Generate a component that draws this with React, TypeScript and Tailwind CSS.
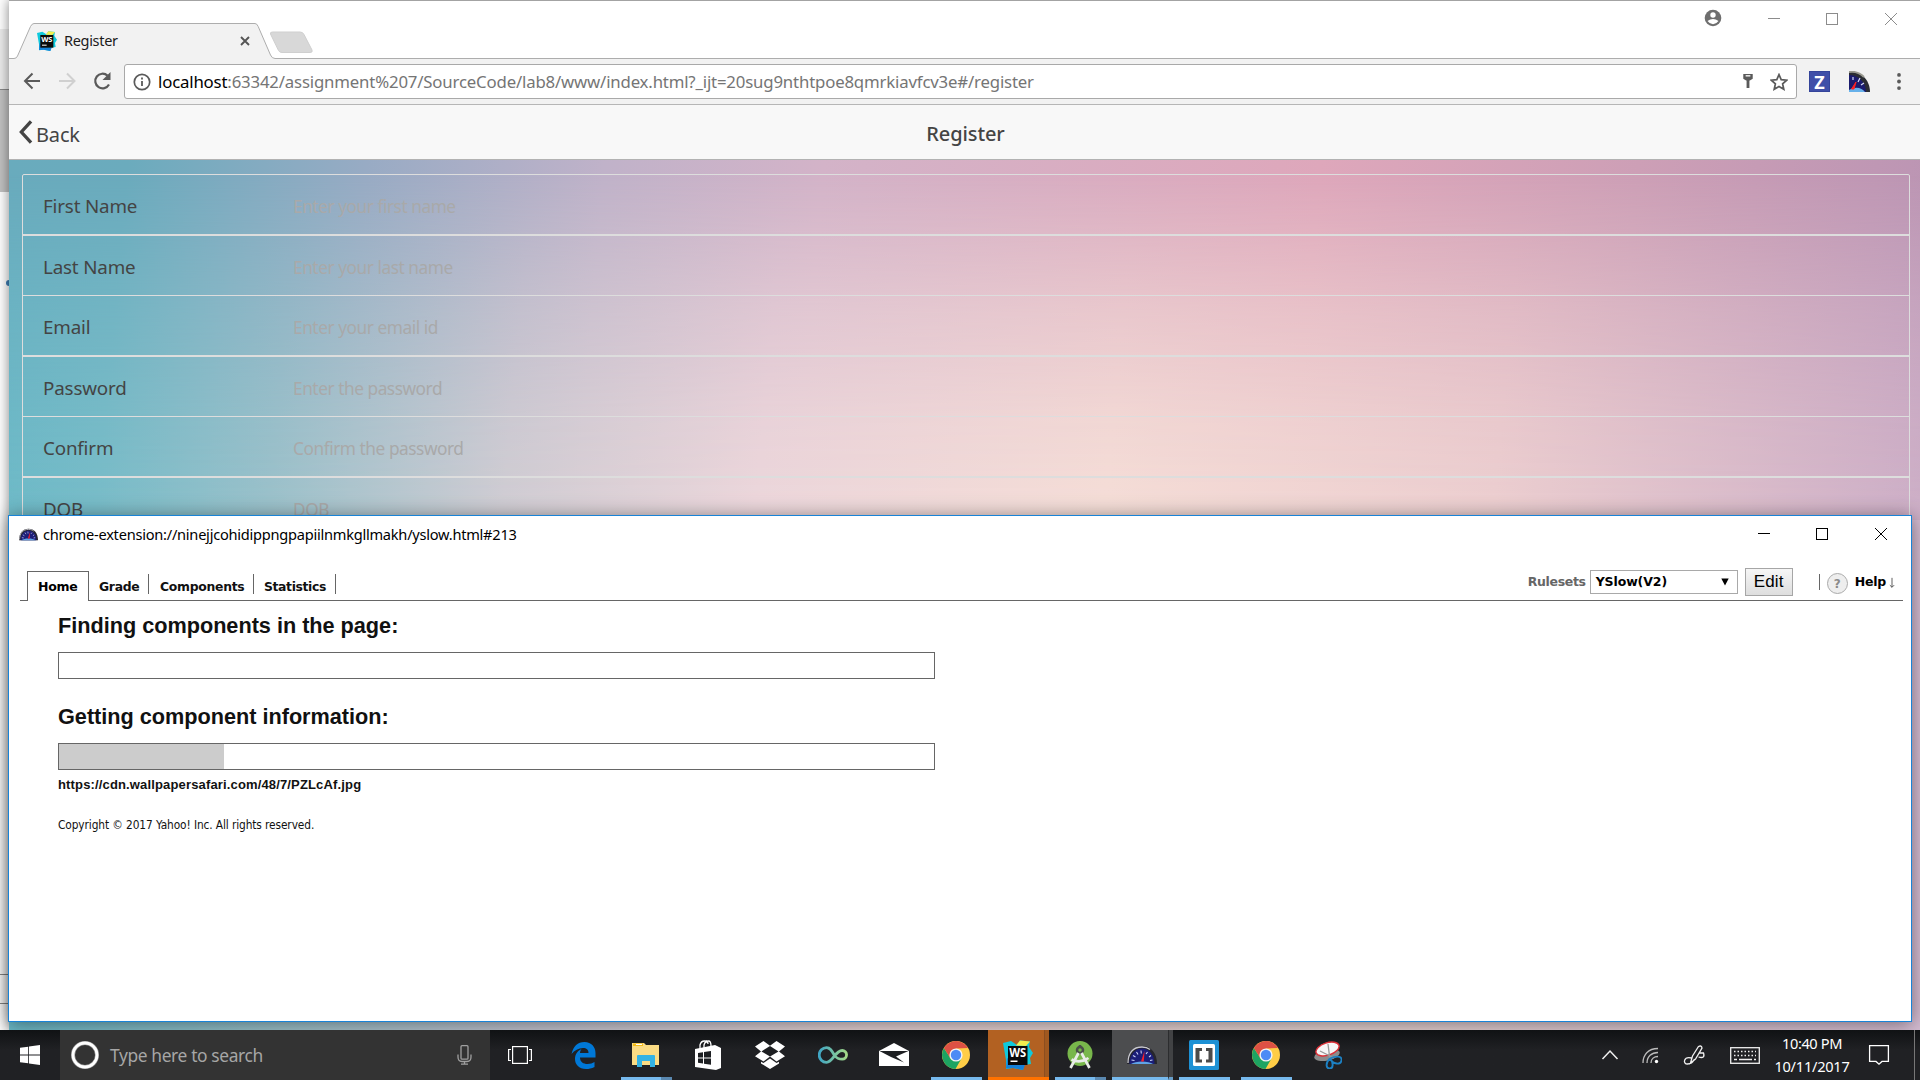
import React from "react";

const fields = [
  { label: "First Name", hint: "Enter your first name", row: "h-[61px] border-b-2" },
  { label: "Last Name", hint: "Enter your last name", row: "h-[60px] border-b" },
  { label: "Email", hint: "Enter your email id", row: "h-[61px] border-b-2" },
  { label: "Password", hint: "Enter the password", row: "h-[60px] border-b" },
  { label: "Confirm", hint: "Confirm the password", row: "h-[61px] border-b-2" },
  { label: "DOB", hint: "DOB", row: "h-[60px] border-b" },
];

function WebStormIcon({ className }: { className: string }) {
  return (
    <svg viewBox="0 0 30 30" className={className}>
      <path d="M0 3 L8 1 L14 5 L17 0.500 L27 1.500 L26 7 L30 13 L27 18 L28 24 L21 25 L20 30 L10 28 L3 29 L3 20 Z" fill="#0fc9dc" />
      <path d="M4 18 L12 24 L22 25 L20 30 L10 28 L3 28.500 Z" fill="#1580d8" />
      <path d="M13 5.500 L17 0.500 L27 1.500 L23 6 Z" fill="#f4ee4d" />
      <rect x="5" y="6" width="19.500" height="19" fill="#0a0a0a" />
      <text x="6.200" y="16.500" fontSize="11.500" fontWeight="bold" fontFamily="Open Sans, sans-serif" fill="#fff" textLength="17" lengthAdjust="spacingAndGlyphs">WS</text>
      <rect x="7.500" y="20.500" width="7" height="1.500" fill="#fff" />
    </svg>
  );
}

function GaugeIcon({ className }: { className: string }) {
  return (
    <svg viewBox="0 0 30 18" className={className}>
      <path d="M0 18 C0 7 6 0 15 0 C24 0 30 7 30 18 Z" fill="#26262c" />
      <path d="M1 17 C1 7 6 1 15 1 C19 1 21 2 23 3.500" fill="none" stroke="#c9c9cf" strokeWidth="1.300" />
      <path d="M2.500 18 C2.500 8.500 8 2.500 15 2.500 C22 2.500 27.500 8.500 27.500 18 Z" fill="#1c1e78" />
      <path d="M4 18 C8 14.500 22 14.500 26 18 Z" fill="#5fa3e6" />
      <path d="M4.500 14 L7.500 14.500 M6 9.500 L8.500 11 M9.500 6 L11 8.500 M14 4.500 L14.300 7.500 M20.500 6 L19 8 M24 9.500 L22 11 M25.500 14 L23 14.500" stroke="#c9d0f5" strokeWidth="1.100" />
      <path d="M17.500 5 L16.800 15.500 L14 15.500 Z" fill="#f5202c" />
    </svg>
  );
}

function ChromeIcon({ className }: { className: string }) {
  return (
    <svg viewBox="0 0 28 28" className={className}>
      <circle cx="14" cy="14" r="14" fill="#ffcd46" />
      <path d="M1.900 7 A14 14 0 0 0 13.500 28 L19.600 17.200 L14 14 L8.500 17.200 Z" fill="#1da462" />
      <path d="M1.900 7 A14 14 0 0 1 26.100 7 L14 7.500 L8.400 17.200 Z" fill="#dd5144" />
      <circle cx="14" cy="14" r="6.600" fill="#f4f4f4" />
      <circle cx="14" cy="14" r="5.200" fill="#4c8bf5" />
    </svg>
  );
}

function BrowserWindow() {
  return (
    <div className="absolute top-0 left-[9px] flex h-[1030px] w-[1911px] flex-col border-t border-[#a3a3a3] bg-white shadow-[0_0_12px_rgba(0,0,0,0.5)]">
      <div className="flex h-[58px] shrink-0 justify-between">
        <div className="relative flex w-[306px] pt-[22px]">
          <svg className="absolute top-0 left-0 h-[59px] w-[306px]" viewBox="0 0 306 59">
            <path d="M0 57.500 H5 Q7.500 57.500 8.500 55 L21.500 25.500 Q23 22.500 25 22.500 H246 Q248 22.500 249.200 25.500 L261.500 54 Q263 57.500 266 57.500 H306 V59 H0 Z" fill="#f2f2f2" />
            <path d="M0 57.500 H5 Q7.500 57.500 8.500 55 L21.500 25.500 Q23 22.500 25 22.500 H246 Q248 22.500 249.200 25.500 L261.500 54 Q263 57.500 266 57.500 H306" fill="none" stroke="#adadad" />
            <path d="M263.500 31 H291 Q294 31 295 33.500 L303 49 Q304 51.500 301 51.500 H273 Q270.500 51.500 269.500 49.500 L261.500 33 Q261 31 263.500 31 Z" fill="#d8d8d8" stroke="#cfcfcf" />
          </svg>
          <div className="relative flex h-[36px] w-[250px] items-center pl-[28px]">
            <WebStormIcon className="size-5" />
            <span className="ml-[7px] text-[14.5px] tracking-[-0.31px] text-[#1b1b1b]">Register</span>
            <svg viewBox="0 0 10 10" className="ml-[122px] size-[10px]"><path d="M1 1 L9 9 M9 1 L1 9" stroke="#555" strokeWidth="1.900" /></svg>
          </div>
        </div>
        <div className="grow border-b border-[#adadad]" />
        <div className="flex w-[236px] border-b border-[#adadad]">
          <svg viewBox="0 0 236 57" className="h-[57px] w-[236px]">
            <circle cx="29" cy="17" r="8.300" fill="#6e6e6e" />
            <circle cx="29" cy="14" r="2.700" fill="#fff" />
            <path d="M23.500 20 Q29 16 34.500 20 Q32 23.300 29 23.300 Q26 23.300 23.500 20 Z" fill="#fff" />
            <path d="M84 17.500 H96" stroke="#8c8c8c" />
            <rect x="142.500" y="12.500" width="11" height="11" fill="none" stroke="#8c8c8c" />
            <path d="M201 12 L213 24 M213 12 L201 24" stroke="#8c8c8c" />
          </svg>
        </div>
      </div>
      <div className="flex h-[46px] shrink-0 items-center border-b border-[#b6b6b6] bg-[#f2f2f2] pl-[14px]">
        <svg viewBox="0 0 90 20" className="mb-[2px] h-5 w-[90px]" fill="none" strokeWidth="2">
          <path d="M17 10 H2 M9.500 2.500 L2 10 L9.500 17.500" stroke="#5a5a5a" />
          <path d="M36 10 H51 M44 2.500 L51.500 10 L44 17.500" stroke="#d0d0d0" />
          <path d="M86 13.500 A7.300 7.300 0 1 1 84.500 4.600" stroke="#5a5a5a" strokeWidth="2.200" />
          <path d="M87.500 1 V9 H79.500 Z" fill="#5a5a5a" />
        </svg>
        <div className="ml-[11px] flex h-[35px] w-[1673px] shrink-0 items-center rounded-[3px] border border-[#a9a9a9] bg-white pl-[8px]">
          <svg viewBox="0 0 18 18" className="size-[18px]"><circle cx="9" cy="9" r="7.700" fill="none" stroke="#5a5a5a" strokeWidth="1.700" /><path d="M9 8 V13 M9 4.500 V6.500" stroke="#5a5a5a" strokeWidth="1.800" /></svg>
          <span className="ml-[7px] text-[16.8px] tracking-[-0.175px] whitespace-nowrap text-[#757575]">
            <span className="text-black">localhost</span>:63342/assignment%207/SourceCode/lab8/www/index.html?_ijt=20sug9nthtpoe8qmrkiavfcv3e#/register
          </span>
          <div className="grow" />
          <svg viewBox="0 0 12 18" className="mr-[16px] h-[17px] w-3"><path d="M1 1 H11 V6 L8 8 H7.500 V16 H4.500 V8 H4 L1 6 Z" fill="#5a5a5a" /><path d="M3.500 3 H8.500" stroke="#fff" strokeWidth="1.400" /></svg>
          <svg viewBox="0 0 18 18" className="mr-[8px] size-[18px]"><path d="M9 1.600 L11.200 6.600 L16.700 7.200 L12.600 10.800 L13.800 16.200 L9 13.400 L4.200 16.200 L5.400 10.800 L1.300 7.200 L6.800 6.600 Z" fill="none" stroke="#5a5a5a" strokeWidth="1.700" /></svg>
        </div>
        <div className="ml-[12px] flex size-[21px] items-center justify-center border border-[#34449a] bg-[#3f4fa8] text-[18px] leading-none font-bold text-white">Z</div>
        <svg viewBox="0 0 21 21" className="ml-[19px] size-[21px]">
          <path d="M0 21 V0 C12 0 21 9 21 21 Z" fill="#2b2d33" />
          <path d="M0 1 C6 0 11 2 15 6" fill="none" stroke="#9a9a90" strokeWidth="1.800" />
          <path d="M0 21 V4 C9 4 17 11 17 21 Z" fill="#1b1c6e" />
          <path d="M0 19 C7 15 13 17 16 21 H0 Z" fill="#67b1ea" />
          <path d="M4 6 V9 M11 7 L9 11 M15 12 L12 14" stroke="#d6dbf5" strokeWidth="1.200" />
          <path d="M7 11 L5 18 L2.500 18 Z" fill="#f22" stroke="#f22" />
        </svg>
        <svg viewBox="0 0 4 18" className="ml-[27px] h-[17px] w-[4px]" fill="#5a5a5a"><circle cx="2" cy="2" r="2" /><circle cx="2" cy="9" r="2" /><circle cx="2" cy="16" r="2" /></svg>
      </div>
      <div className="grid h-[55px] shrink-0 grid-cols-3 items-center border-b border-[#b2b2b2] bg-[#f8f8f8] text-[20px] text-[#444]">
        <div className="flex items-center pl-[9px]">
          <svg viewBox="0 0 15 26" className="h-[24px] w-[15px]"><path d="M13.500 1.500 L3 13 L13.500 24.500" fill="none" stroke="#444" strokeWidth="3.600" /></svg>
          <span className="ml-[3px] pt-[5px] tracking-[-0.17px]">Back</span>
        </div>
        <span className="pt-[4px] pl-[2px] text-center font-medium tracking-[-0.1px]">Register</span>
      </div>
      <div className="relative flex grow flex-col bg-[#dca9bd] pt-[14px] pr-[10px] pl-[13px]">
        <div className="absolute inset-0 bg-[linear-gradient(95deg,#69abbd_0%,#6babbd_6%,#98abc4_18%,#c0b2c9_30%,#d3b3c8_41%,#dea7bb_66%,#cd9fb6_82%,#b893b3_100%)]" />
        <div className="absolute inset-x-0 top-0 h-[360px] bg-[linear-gradient(95deg,#6bb9c7_0%,#78bcc8_6%,#9bc1ca_15%,#d0cdd3_27%,#ecd7db_40%,#f5ded7_58%,#eccfd0_78%,#cdafc7_100%)] [mask-image:linear-gradient(180deg,transparent_4%,rgba(0,0,0,0.56)_42%,rgba(0,0,0,0.86)_72%,black)]" />
        <div className="absolute inset-x-0 top-[360px] bottom-0 bg-[linear-gradient(90deg,#6bb9c7_0%,#9bc1ca_14%,#c0c3cf_27%,#e4d0d2_45%,#e6d2d0_70%,#d3bbd1_100%)]" />
        <div className="relative flex h-[364px] flex-col rounded-t-[2px] border border-[#dddddd]">
          {fields.map((f) => (
            <div key={f.label} className={`flex shrink-0 items-center border-[#dddddd] pt-[3px] pl-[20px] ${f.row}`}>
              <span className="w-[250px] text-[18.8px] tracking-[-0.17px] text-[#444]">{f.label}</span>
              <span className="pt-[2px] text-[17.3px] tracking-[-0.46px] text-[#a9a9a9]">{f.hint}</span>
            </div>
          ))}
        </div>
      </div>
    </div>
  );
}

function YSlowWindow() {
  return (
    <div className="absolute top-[515px] left-[8px] flex h-[507px] w-[1904px] flex-col border border-[#1883d7] bg-white text-black shadow-[0_2px_18px_rgba(0,0,0,0.45)]">
      <div className="flex h-[38px] shrink-0 items-center pl-[10px]">
        <GaugeIcon className="mb-px h-[13px] w-[19px]" />
        <span className="ml-[5px] text-[14.6px] tracking-[-0.245px]">chrome-extension://ninejjcohidippngpapiilnmkgllmakh/yslow.html#213</span>
        <div className="grow" />
        <svg viewBox="0 0 150 38" className="mr-[3px] h-[38px] w-[150px]" fill="none" stroke="#000">
          <path d="M0 17.500 H12" />
          <rect x="58.500" y="12.500" width="11" height="11" />
          <path d="M117 12 L129 24 M129 12 L117 24" />
        </svg>
      </div>
      <div className="ml-[11px] flex h-[47px] w-[1883px] shrink-0 border-b border-[#666] font-['DejaVu_Sans'] text-[12.5px] font-bold">
        <div className="mt-[17px] -mb-px ml-[7px] flex h-[30px] w-[62px] items-center border border-b-0 border-[#666] bg-white pt-[2px] pl-[10px] text-black">
          <span className="tracking-[-0.3px]">Home</span>
        </div>
        <div className="mt-[20px] flex h-[20px] text-[12.4px] text-[#111]">
          <span className="h-[20px] w-[60px] border-r border-[#666] pt-[5px] pl-[10px] leading-4 tracking-[-0.3px]">Grade</span>
          <span className="h-[20px] w-[105px] border-r border-[#666] pt-[5px] pl-[11px] leading-4 tracking-[-0.28px]">Components</span>
          <span className="h-[20px] w-[82px] border-r border-[#666] pt-[5px] pl-[10px] leading-4 tracking-[-0.37px]">Statistics</span>
        </div>
        <div className="grow" />
        <div className="mt-[13px] flex h-[30px] items-center">
          <span className="pr-[4px] tracking-[-0.35px] text-[#666]">Rulesets</span>
          <div className="flex h-[24px] w-[148px] items-center border border-[#a9a9a9] pr-[8px] pl-[5px]">
            <span className="pt-px tracking-[-0.1px]">YSlow(V2)</span>
            <div className="grow" />
            <svg viewBox="0 0 8 8" className="size-2"><path d="M0.300 0.500 H7.700 L4 7.500 Z" /></svg>
          </div>
          <div className="ml-[7px] flex h-[28px] w-[48px] items-center justify-center border border-[#a6a6a6] bg-linear-to-b from-[#f6f6f6] to-[#dedede] font-['Liberation_Sans'] text-[17px] font-normal tracking-[0.1px]">Edit</div>
          <div className="ml-[26px] h-[16px] w-px bg-[#666]" />
          <div className="mt-[3px] ml-[7px] flex size-[21px] items-center justify-center rounded-full border border-[#aaa] bg-[#eee] text-[12px] text-[#8a8a8a]">?</div>
          <span className="ml-[7px] tracking-[-0.2px]">Help</span>
          <svg viewBox="0 0 7 12" className="mt-[2px] mr-[8px] ml-[3px] h-[12px] w-[6px]"><path d="M3.500 0 V11 M1 8.500 L3.500 11 L6 8.500" fill="none" stroke="#444" /></svg>
        </div>
      </div>
      <div className="ml-[49px] flex w-[877px] flex-col font-['Liberation_Sans'] text-[#111]">
        <h1 className="mt-[10px] h-[30px] text-[21.7px] leading-[30px] font-bold tracking-[-0.02px]">Finding components in the page:</h1>
        <div className="mt-[11px] h-[27px] border border-[#666]" />
        <h1 className="mt-[23px] h-[30px] text-[21.7px] leading-[30px] font-bold tracking-[-0.02px]">Getting component information:</h1>
        <div className="mt-[11px] h-[27px] border border-[#666]"><div className="h-full w-[165px] bg-[#ccc]" /></div>
        <p className="mt-[6px] text-[13px] leading-[18px] font-bold tracking-[0.15px]">https://cdn.wallpapersafari.com/48/7/PZLcAf.jpg</p>
        <p className="mt-[22px] font-['DejaVu_Sans_Condensed'] text-[11.8px] leading-[18px] tracking-[-0.1px]">Copyright © 2017 Yahoo! Inc. All rights reserved.</p>
      </div>
    </div>
  );
}

function Slot({ className, children }: { className: string; children: React.ReactNode }) {
  return <div className={`flex h-[50px] shrink-0 flex-col items-center justify-between ${className}`}>{children}</div>;
}

function Taskbar() {
  return (
    <div className="absolute bottom-0 left-0 flex h-[50px] w-[1920px] bg-linear-to-b from-[#101214] to-[#202124] to-40%">
      <div className="flex w-[60px] items-center justify-center">
        <svg viewBox="0 0 20 20" className="size-5" fill="#fff"><path d="M0 2.800 L8.200 1.700 V9.600 H0 Z M9 1.600 L20 0 V9.600 H9 Z M0 10.400 H8.200 V18.300 L0 17.200 Z M9 10.400 H20 V20 L9 18.400 Z" /></svg>
      </div>
      <div className="flex w-[430px] items-center bg-[#333] pl-[11px]">
        <svg viewBox="0 0 28 28" className="size-[28px]"><circle cx="14" cy="14" r="12" fill="none" stroke="#999" strokeWidth="4" /><circle cx="14" cy="14" r="12" fill="none" stroke="#fff" strokeWidth="2.800" /></svg>
        <span className="ml-[11px] text-[17.4px] tracking-[-0.38px] text-[#a6a6a6]">Type here to search</span>
        <div className="grow" />
        <svg viewBox="0 0 15 20" className="mr-[18px] h-5 w-[15px]" fill="none" stroke="#a0a0a0" strokeWidth="1.300"><rect x="4" y="0.700" width="7" height="13.500" rx="1" /><path d="M1 9.500 V12 Q1 16.500 5 16.500 H10 Q14 16.500 14 12 V9.500 M7.500 16.500 V19 M4 19.200 H11" /></svg>
      </div>
      <div className="flex w-[61px] items-center pl-[18px]">
        <svg viewBox="0 0 24 18" className="h-[18px] w-6" fill="none" stroke="#fff" strokeWidth="1.200"><rect x="4.600" y="0.600" width="14.800" height="16.800" /><path d="M3 3.500 H0.600 V14.500 H3 M21 3.500 H23.400 V14.500 H21" /></svg>
      </div>
      <Slot className="w-[66px] pt-[12px] pr-[1px]">
        <svg viewBox="0 0 24 27" className="size-[27px]"><path d="M0 12 C2 4 6 0 13 0 C20 0 24 5 24 11 V15.500 H8.500 C8.500 20 12 22 16 22 C19 22 21 21.200 23 20 V25 C20 26.500 17.500 27 14.500 27 C7.500 27 3.500 22.500 3.500 17 C3.500 12 6.500 8.500 10 7 C9 8.500 8.600 9.500 8.500 11 H17 C17 7.500 15 6 11.500 6 C7 6 3 8.500 0 12 Z" fill="#0078d7" /></svg>
      </Slot>
      <Slot className="w-[59px] pt-[12px]">
        <svg viewBox="0 0 28 25" className="-ml-px h-[25px] w-[28px]"><path d="M0 1 H12 L14 3 H27 V23 H0 Z" fill="#fbdc84" /><path d="M1 1.500 H11 V4 H1 Z" fill="#f5bd18" /><path d="M4 2 H10 V3 H4 Z" fill="#fff" /><path d="M5 25 V14 Q5 13 6 13 H22 Q23 13 23 14 V25 H18 V19 H10 V25 Z" fill="#34b3e4" /></svg>
        <div className="flex h-[3px] w-[51px]"><div className="w-10 bg-[#76b9ed]" /><div className="grow bg-[#5a88b0]" /></div>
      </Slot>
      <Slot className="w-[64px] pt-[10px]">
        <svg viewBox="0 0 26 30" className="h-[30px] w-[26px]"><path d="M5 9 V5 Q6 1 9.500 1 Q13 1 13 4 M9 9 V5 Q10 1 13.500 1 Q16 1 16 6" fill="none" stroke="#fff" strokeWidth="1.300" /><path d="M0 9 L20 5 L26 8 V28 L21 30 L0 27 Z" fill="#fff" /><path d="M3 13 L8 12.300 V17.500 H3 Z M9 12.100 L16 11 V17.500 H9 Z M3 18.500 H8 V23.500 L3 22.700 Z M9 18.500 H16 V24.700 L9 23.700 Z" fill="#1d1f22" /></svg>
      </Slot>
      <Slot className="w-[60px] pt-[11px]">
        <svg viewBox="0 0 30 28" className="h-[28px] w-[30px]" fill="#fff"><path d="M8.500 0 L15 4.800 L21.500 0 L30 5.500 L24 10.400 L30 15.300 L21.500 20.500 L15 15.500 L8.500 20.500 L0 15.300 L6 10.400 L0 5.500 Z" /><path d="M15 5 L23.500 10.400 L15 15.500 L6.500 10.400 Z" fill="#1d1f22" /><path d="M15 17.500 L21.500 22 L24 20.700 V22.500 L15 28 L6 22.500 V20.700 L8.500 22 Z" /></svg>
      </Slot>
      <Slot className="w-[64px] pt-[16px]">
        <svg viewBox="0 0 30 18" className="ml-px h-[18px] w-[30px]"><defs><linearGradient id="loop"><stop offset="0" stopColor="#3fa5c4" /><stop offset="1" stopColor="#a3da88" /></linearGradient></defs><path d="M16.500 9.500 C14 5 12.500 1.700 8.500 1.700 A7.300 7.300 0 0 0 8.500 16.300 C15 16.300 17 4.500 24.200 4.500 A4.300 4.300 0 0 1 24.200 13.200 C20.500 13.200 18.500 12 16.500 9.500" fill="none" stroke="url(#loop)" strokeWidth="2.800" /></svg>
      </Slot>
      <Slot className="w-[60px] pt-[13px]">
        <svg viewBox="0 0 30 23" className="h-[23px] w-[30px]"><path d="M0 8 L15 0 L30 8 V23 H0 Z" fill="#fff" /><path d="M0.500 8 H29.500 L17 13.500 L25 19.500 L12 14 Z" fill="#1d1f22" /></svg>
      </Slot>
      <Slot className="w-[64px] pt-[11px]">
        <ChromeIcon className="size-[28px]" />
        <div className="h-[3px] w-[51px] bg-[#76b9ed]" />
      </Slot>
      <div className="flex w-[61px] bg-[#b26122]">
        <Slot className="w-[61px] border-b-[3px] border-[#ff7200] pt-[10px]"><WebStormIcon className="mr-[1px] size-[30px]" /></Slot>
        <div className="-ml-[5px] h-[47px] w-[5px] border-l border-[#8c4e20] bg-[#a0581f]" />
      </div>
      <Slot className="w-[63px] pt-[11px]">
        <svg viewBox="0 0 26 28" className="mr-[1px] h-[28px] w-[26px]"><circle cx="13" cy="12.500" r="12.500" fill="#78b74b" /><circle cx="13" cy="9" r="3" fill="none" stroke="#4a4f4a" strokeWidth="2.500" /><path d="M13 4 V6" stroke="#4a4f4a" strokeWidth="2.500" /><path d="M11.500 12 L3.500 27 M14.500 12 L22.500 27 M4.500 18.500 Q13 23 21.500 17" fill="none" stroke="#e9ece8" strokeWidth="2.700" /></svg>
        <div className="flex h-[3px] w-[51px]"><div className="w-10 bg-[#76b9ed]" /><div className="grow bg-[#5a88b0]" /></div>
      </Slot>
      <div className="flex w-[61px]">
        <Slot className="w-[56px] border-b-[3px] border-[#76b9ed] bg-[#4c4d4f] pt-[16px]"><GaugeIcon className="ml-[3px] h-[18px] w-[30px]" /></Slot>
        <div className="w-[5px] border-b-[3px] border-l border-b-[#689fcb] border-l-[#2c2d2f] bg-[#414244]" />
      </div>
      <Slot className="w-[63px] pt-[10px]">
        <svg viewBox="0 0 30 30" className="-ml-px size-[30px]"><rect width="30" height="30" rx="1.500" fill="#1d91d5" /><rect x="4" y="4" width="22" height="22" rx="1.500" fill="#fff" /><path d="M13 8 H6.500 V22.500 H13 V19.500 H10.500 V11 H13 Z M17 8 H23.500 V22.500 H17 V19.500 H19.500 V11 H17 Z" fill="#4b4b4b" /></svg>
        <div className="h-[3px] w-[51px] bg-[#76b9ed]" />
      </Slot>
      <Slot className="w-[61px] pt-[11px]">
        <ChromeIcon className="-ml-px size-[28px]" />
        <div className="h-[3px] w-[51px] bg-[#76b9ed]" />
      </Slot>
      <Slot className="w-[62px] pt-[11px]">
        <svg viewBox="0 0 28 28" className="size-[28px]"><ellipse cx="13" cy="14" rx="13" ry="5.500" fill="#8b8b8b" transform="rotate(-12 13 14)" /><ellipse cx="13.500" cy="8" rx="12" ry="6.200" fill="#f6f6f6" stroke="#dc2f36" strokeWidth="1.400" transform="rotate(-18 13.500 8)" /><path d="M14 3 L16 19 M6 10 L20 17" stroke="#999" strokeWidth="1.300" /><path d="M16 17.500 C11 22 12 28 16 27.500 C20 27 19 21 16 17.500 C21 15 28 14.500 27.500 19 C27 24 19 24 16 17.500" fill="none" stroke="#1c81c4" strokeWidth="1.900" /></svg>
      </Slot>
      <div className="grow" />
      <svg viewBox="0 0 180 50" className="mr-[-2px] h-[50px] w-[180px]" fill="none" stroke="#f0f0f0" strokeWidth="1.300">
        <path d="M14.500 29 L22 21 L29.500 29" strokeWidth="1.500" />
        <path d="M55 33 C55 25 60 18.500 70 18.500 M59 33 C59 26.500 63.500 22.500 70 22.500 M63 33 C63 29 66 26.500 70 26.500" stroke="#bbb" />
        <circle cx="68.500" cy="31.500" r="1.700" fill="#fff" stroke="none" />
        <path d="M103.500 28 C95.500 26 94.500 34 99.500 34 C104.500 34 105.500 31 106.500 29 M102.500 33 L104.500 26 L110.500 16.500 Q113.500 15 114 18 L107.500 29 Z M110.500 27 Q117.500 29 115.500 23 L111.500 23" />
        <rect x="142.700" y="17.700" width="28.600" height="15.600" />
        <path d="M146 21.500 H168 M146 25.500 H168" strokeDasharray="1.500 2" />
        <path d="M146 29.500 H149 M151 29.500 H164 M166 29.500 H168" />
      </svg>
      <div className="flex w-[92px] flex-col items-center pt-[2px] text-[14.6px] leading-[23px] text-white">
        <span className="tracking-[-0.4px]">10:40 PM</span>
        <span className="tracking-[-0.25px]">10/11/2017</span>
      </div>
      <svg viewBox="0 0 62 50" className="h-[50px] w-[62px]" fill="none" stroke="#fff" strokeWidth="1.300">
        <path d="M11.600 15.600 H30.400 V31.400 H24 L21 34.200 L18 31.400 H11.600 Z" />
        <path d="M56.500 0 V50" stroke="#777" strokeWidth="1" />
      </svg>
    </div>
  );
}

export default function App() {
  return (
    <div className="relative h-[1080px] w-[1920px] overflow-hidden bg-white font-['Noto_Sans',sans-serif]">
      <div className="flex h-[1030px] w-[9px] flex-col bg-white">
        <div className="h-[29px] bg-white" />
        <div className="h-[61px] border-b border-[#888] bg-[#ececec]" />
        <div className="h-[102px] bg-[#c2c2c2]" />
        <div className="flex h-[782px] flex-col items-end pt-[88px]"><div className="h-[6px] w-[3px] rounded-l-full bg-[#3f7fb5]" /></div>
        <div className="h-[30px] border-y border-[#888]" />
      </div>
      <BrowserWindow />
      <YSlowWindow />
      <Taskbar />
    </div>
  );
}
